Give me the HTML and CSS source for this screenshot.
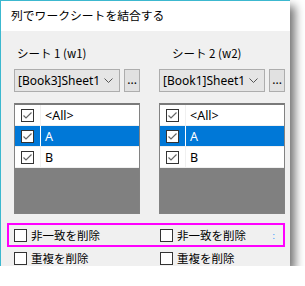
FILE: index.html
```html
<!DOCTYPE html>
<html lang="ja">
<head>
<meta charset="utf-8">
<link rel="stylesheet" href="styles.css">
</head>
<body>
<div class="window">
  <div class="titlebar">列でワークシートを結合する</div>
  <div class="content">
    <div class="cols">
      <div class="col">
        <div class="label">シート 1 (w1)</div>
        <div class="pick">
          <div class="combo"><span>[Book3]Sheet1</span><svg class="chev" width="9" height="5" viewBox="0 0 9 5"><path d="M0.5 0.5 L4.5 4.5 L8.5 0.5" fill="none" stroke="#555" stroke-width="1"/></svg></div>
          <div class="dots">...</div>
        </div>
        <div class="list">
          <div class="row"><span class="cbcell"><span class="cb"><svg width="11" height="11" viewBox="0 0 11 11"><path d="M1.5 5.5 L4 8 L9.5 2.5" fill="none" stroke="#666" stroke-width="1.2"/></svg></span></span><span class="txt">&lt;All&gt;</span></div>
          <div class="row sel"><span class="cbcell"><span class="cb"><svg width="11" height="11" viewBox="0 0 11 11"><path d="M1.5 5.5 L4 8 L9.5 2.5" fill="none" stroke="#666" stroke-width="1.2"/></svg></span></span><span class="txt">A</span></div>
          <div class="row"><span class="cbcell"><span class="cb"><svg width="11" height="11" viewBox="0 0 11 11"><path d="M1.5 5.5 L4 8 L9.5 2.5" fill="none" stroke="#666" stroke-width="1.2"/></svg></span></span><span class="txt">B</span></div>
          <div class="empty"></div>
        </div>
      </div>
      <div class="col">
        <div class="label">シート 2 (w2)</div>
        <div class="pick">
          <div class="combo"><span>[Book1]Sheet1</span><svg class="chev" width="9" height="5" viewBox="0 0 9 5"><path d="M0.5 0.5 L4.5 4.5 L8.5 0.5" fill="none" stroke="#555" stroke-width="1"/></svg></div>
          <div class="dots">...</div>
        </div>
        <div class="list">
          <div class="row"><span class="cbcell"><span class="cb"><svg width="11" height="11" viewBox="0 0 11 11"><path d="M1.5 5.5 L4 8 L9.5 2.5" fill="none" stroke="#666" stroke-width="1.2"/></svg></span></span><span class="txt">&lt;All&gt;</span></div>
          <div class="row sel"><span class="cbcell"><span class="cb"><svg width="11" height="11" viewBox="0 0 11 11"><path d="M1.5 5.5 L4 8 L9.5 2.5" fill="none" stroke="#666" stroke-width="1.2"/></svg></span></span><span class="txt">A</span></div>
          <div class="row"><span class="cbcell"><span class="cb"><svg width="11" height="11" viewBox="0 0 11 11"><path d="M1.5 5.5 L4 8 L9.5 2.5" fill="none" stroke="#666" stroke-width="1.2"/></svg></span></span><span class="txt">B</span></div>
          <div class="empty"></div>
        </div>
      </div>
    </div>
    <div class="hilite">
      <label class="opt"><span class="box"></span>非一致を削除</label>
      <label class="opt"><span class="box"></span>非一致を削除</label>
      <span class="mark">:</span>
    </div>
    <div class="opts">
      <label class="opt"><span class="box"></span>重複を削除</label>
      <label class="opt"><span class="box"></span>重複を削除</label>
    </div>
  </div>
</div>
</body>
</html>
```
FILE: styles.css
```css
html, body {
  margin: 0;
  padding: 0;
  background: #ffffff;
}
body {
  font-family: "Noto Sans", "Noto Sans CJK JP", sans-serif;
  font-size: 12px;
  color: #000;
}
.window {
  width: 289px;
  height: 265px;
  border-top: 1px solid #3cb8cf;
  border-left: 1px solid #3cb8cf;
  background: #f0f0f0;
  box-shadow: 5px 6px 9px rgba(0,0,0,0.55);
  display: flex;
  flex-direction: column;
}
.titlebar {
  height: 31px;
  background: #fff;
  padding-left: 10px;
  line-height: 28px;
  font-family: "Noto Sans CJK JP", sans-serif;
  font-size: 11.8px;
  color: #000;
}
.content {
  padding: 14px 0 0 13px;
}
.cols {
  display: grid;
  grid-template-columns: 126px 126px;
  column-gap: 19px;
}
.label {
  height: 16px;
  line-height: 16px;
  padding-left: 3px;
  font-family: "Noto Sans CJK JP", sans-serif;
  font-size: 11.5px;
}
.col:nth-child(2) .label { padding-left: 13px; }
.pick {
  display: flex;
  gap: 4px;
  margin-top: 8px;
  height: 23px;
}
.combo {
  height: 21px;
  border: 1px solid #adadad;
  background: #e5e5e5;
  display: flex;
  align-items: center;
  justify-content: space-between;
  padding: 0 6px 0 3px;
  box-sizing: content-box;
  width: 97px;
  font-size: 12px;
}
.chev { display: block; }
.dots {
  width: 14px;
  height: 21px;
  border: 1px solid #adadad;
  background: #e1e1e1;
  text-align: center;
  line-height: 19px;
  font-size: 12px;
  color: #000;
}
.list {
  margin-top: 11px;
  height: 108px;
  border: 1px solid #828282;
  border-top: 2px solid #7a7a7a;
  background: #808080;
  display: flex;
  flex-direction: column;
}
.row {
  height: 20px;
  background: #fff;
  border-bottom: 1px solid #f0f0f0;
  display: flex;
  align-items: center;
}
.cbcell {
  width: 25px;
  height: 100%;
  border-right: 1px solid #f0f0f0;
  display: flex;
  align-items: center;
  justify-content: center;
  background: #fff;
}
.cb {
  width: 11px;
  height: 11px;
  border: 1px solid #333;
  background: #fff;
  display: block;
}
.cb svg { display: block; }
.txt {
  padding-left: 4px;
  font-size: 12.5px;
}
.row.sel { background: #0078d7; }
.row.sel .txt { color: #fff; }
.row.sel .cbcell { background: #0078d7; border-right-color: #fff; }
.empty { flex: 1; }
.hilite {
  margin: 9px 0 0 -7px;
  width: 269px;
  height: 20px;
  border: 2px solid #ff00ff;
  display: grid;
  grid-template-columns: 146px 1fr auto;
  align-items: center;
  padding-left: 5px;
}
.opts {
  margin-top: 3px;
  display: grid;
  grid-template-columns: 146px 1fr;
  height: 16px;
  align-items: center;
}
.opt {
  display: flex;
  align-items: center;
  font-family: "Noto Sans CJK JP", sans-serif;
  font-size: 11.5px;
}
.box {
  width: 11px;
  height: 11px;
  border: 1px solid #333;
  background: #fff;
  margin-right: 4px;
}
.mark {
  color: #1e90ff;
  font-size: 9px;
  padding-right: 8px;
}
```
